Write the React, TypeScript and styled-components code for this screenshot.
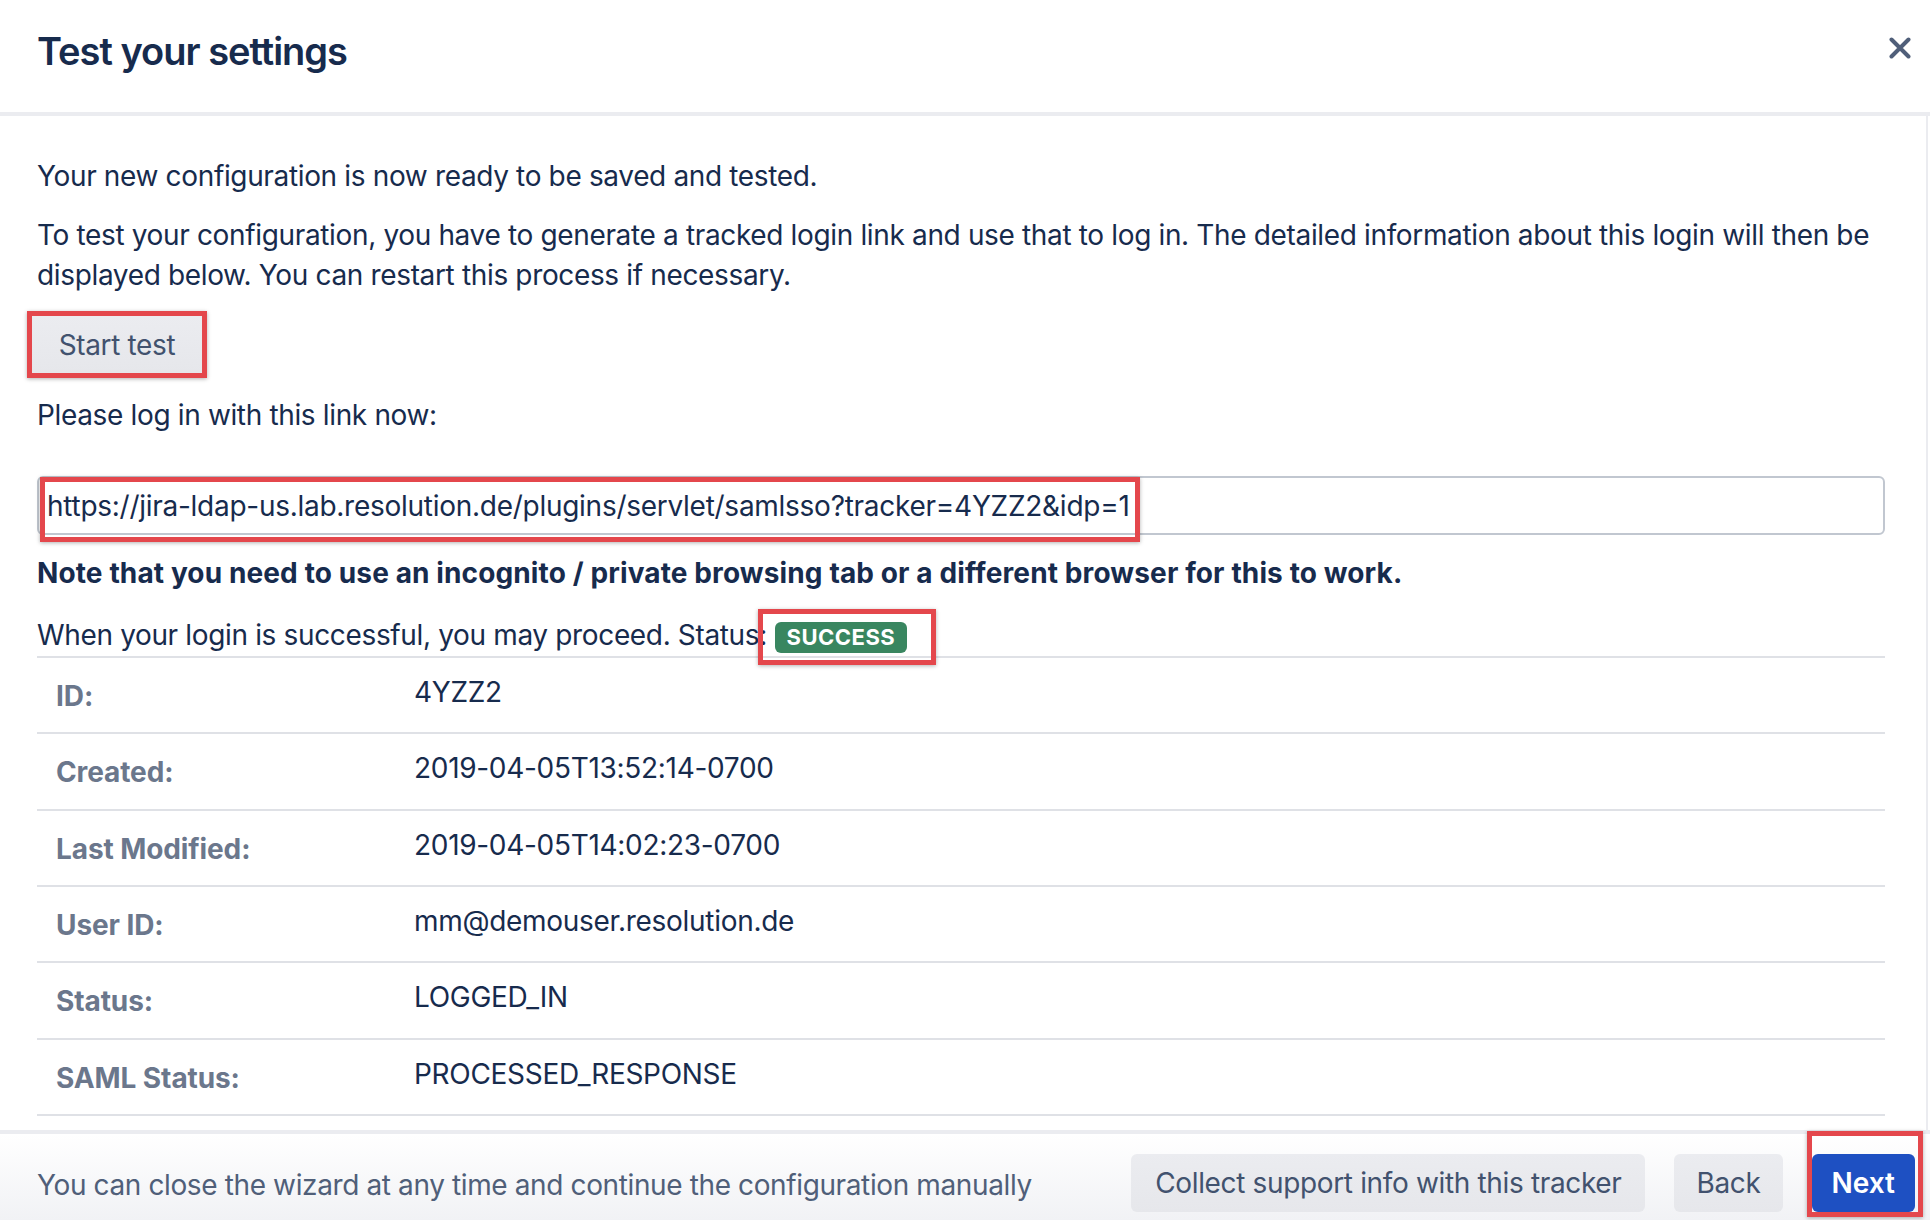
import React from 'react';
import styled, { createGlobalStyle } from 'styled-components';

const Global = createGlobalStyle`
  html, body { margin: 0; padding: 0; background: #fff; }
  body {
    font-family: Inter, "Liberation Sans", Arial, sans-serif;
    color: #172b4d;
    letter-spacing: -0.35px;
    -webkit-font-smoothing: antialiased;
  }
  * { box-sizing: border-box; }
`;

const Dialog = styled.div`
  width: 1930px;
  height: 1220px;
  display: flex;
  flex-direction: column;
  overflow: hidden;
  background: #fff;
`;

const Header = styled.header`
  height: 116px;
  flex-shrink: 0;
  border-bottom: 4px solid #ebecf0;
  display: flex;
  justify-content: space-between;
  align-items: flex-start;
  padding: 28px 19px 0 37px;
`;

const Title = styled.h1`
  margin: 0;
  font-size: 38px;
  line-height: 46px;
  font-weight: 600;
  color: #172b4d;
  letter-spacing: -1px;
`;

const CloseButton = styled.button`
  border: 0;
  background: none;
  padding: 0;
  margin-top: 9px;
  width: 22px;
  height: 22px;
  display: flex;
  color: #505f79;
  cursor: pointer;
`;

const Body = styled.main`
  flex: 1;
  margin-right: 2px;
  border-right: 2px solid #ebecf0;
  padding: 40px 41px 0 37px;
  display: flex;
  flex-direction: column;
  align-items: stretch;
`;

const Text = styled.p<{ $mt?: number; $bold?: boolean }>`
  margin: ${(p) => p.$mt ?? 0}px 0 0;
  font-size: 28px;
  line-height: 40px;
  font-weight: ${(p) => (p.$bold ? 700 : 400)};
  letter-spacing: ${(p) => (p.$bold ? '0.12px' : '-0.35px')};
  color: #172b4d;
`;

const Annotated = styled.div<{ $mt?: number }>`
  align-self: flex-start;
  margin: ${(p) => p.$mt ?? 0}px 0 0 -10px;
  display: inline-flex;
  border: 5px solid #e4474c;
  box-shadow: 0 1px 4px rgba(0, 0, 0, 0.3);
`;

const GrayButton = styled.button<{ $w?: number; $px?: number }>`
  height: ${(p) => (p.$w ? 57 : 58)}px;
  ${(p) => (p.$w ? `width: ${p.$w}px;` : `padding: 0 ${p.$px ?? 24}px;`)}
  border: 0;
  border-radius: ${(p) => (p.$w ? 0 : 6)}px;
  background: linear-gradient(#ebecf0, #e6e7eb);
  color: #42526e;
  font-family: inherit;
  font-size: 28px;
  font-weight: 400;
  letter-spacing: -0.35px;
  display: flex;
  align-items: center;
  justify-content: center;
  cursor: pointer;
  white-space: nowrap;
`;

const PrimaryButton = styled.button`
  position: relative;
  height: 58px;
  padding: 0 20px;
  border: 0;
  border-radius: 6px;
  background: #1e50c2;
  color: #fff;
  font-family: inherit;
  font-size: 28px;
  font-weight: 600;
  display: flex;
  align-items: center;
  cursor: pointer;
`;

const Frame = styled.span<{ $t: number; $l: number; $r: number; $b: number }>`
  position: absolute;
  top: ${(p) => p.$t}px;
  left: ${(p) => p.$l}px;
  right: ${(p) => p.$r}px;
  bottom: ${(p) => p.$b}px;
  border: 5px solid #e4474c;
  box-shadow: 0 1px 4px rgba(0, 0, 0, 0.3);
  pointer-events: none;
`;

const InputWrap = styled.div`
  position: relative;
  margin-top: 41px;
`;

const UrlInput = styled.input`
  display: block;
  width: 100%;
  height: 59px;
  border: 2px solid #c1c7d0;
  border-radius: 6px;
  padding: 0 8px;
  background: #fff;
  font-family: inherit;
  font-size: 28px;
  letter-spacing: -0.27px;
  color: #172b4d;
  outline: none;
`;

const LozengeWrap = styled.span`
  position: relative;
  display: inline-block;
  margin-left: 0;
`;

const Lozenge = styled.span`
  display: inline-block;
  height: 31px;
  line-height: 31px;
  padding: 0 12px;
  border-radius: 6px;
  background: #398660;
  color: #fff;
  font-size: 22px;
  font-weight: 700;
  letter-spacing: 0.5px;
  text-transform: uppercase;
`;

const Table = styled.div`
  margin-top: 1px;
  border-top: 2px solid #dfe1e6;
`;

const Row = styled.div`
  display: grid;
  grid-template-columns: 377px 1fr;
  height: 76.33px;
  border-bottom: 2px solid #dfe1e6;
`;

const Label = styled.div`
  padding: 18px 0 0 19px;
  font-size: 28px;
  line-height: 40px;
  font-weight: 700;
  letter-spacing: -0.1px;
  color: #6b778c;
`;

const Value = styled.div`
  padding-top: 14px;
  font-size: 28px;
  line-height: 40px;
  letter-spacing: -0.3px;
  color: #172b4d;
`;

const Footer = styled.footer`
  height: 90px;
  flex-shrink: 0;
  border-top: 4px solid #ebecf0;
  background: linear-gradient(#ffffff, #f1f2f5);
  display: flex;
  align-items: flex-start;
  padding: 20px 15px 0 37px;
`;

const FooterText = styled.div`
  flex: 1;
  margin-top: 11px;
  font-size: 28px;
  line-height: 40px;
  letter-spacing: -0.38px;
  color: #505f79;
`;

const Actions = styled.div`
  display: flex;
  gap: 29px;
`;

const rows: [string, string][] = [
  ['ID:', '4YZZ2'],
  ['Created:', '2019-04-05T13:52:14-0700'],
  ['Last Modified:', '2019-04-05T14:02:23-0700'],
  ['User ID:', 'mm@demouser.resolution.de'],
  ['Status:', 'LOGGED_IN'],
  ['SAML Status:', 'PROCESSED_RESPONSE'],
];

export default function App() {
  return (
    <Dialog>
      <Global />
      <Header>
        <Title>Test your settings</Title>
        <CloseButton aria-label="Close">
          <svg width="22" height="22" viewBox="0 0 22 22">
            <path d="M2.5 2.5 L19.5 19.5 M19.5 2.5 L2.5 19.5" stroke="currentColor" strokeWidth="4" strokeLinecap="round" fill="none" />
          </svg>
        </CloseButton>
      </Header>
      <Body>
        <Text>Your new configuration is now ready to be saved and tested.</Text>
        <Text $mt={19}>
          To test your configuration, you have to generate a tracked login link and use that to log in. The detailed
          information about this login will then be displayed below. You can restart this process if necessary.
        </Text>
        <Annotated $mt={16}>
          <GrayButton $w={170}>Start test</GrayButton>
        </Annotated>
        <Text $mt={17}>Please log in with this link now:</Text>
        <InputWrap>
          <UrlInput readOnly value="https://jira-ldap-us.lab.resolution.de/plugins/servlet/samlsso?tracker=4YZZ2&idp=1" />
          <Frame $t={1} $l={3} $r={745} $b={-7} />
        </InputWrap>
        <Text $mt={18} $bold>
          Note that you need to use an incognito / private browsing tab or a different browser for this to work.
        </Text>
        <Text $mt={22}>
          When your login is successful, you may proceed. Status:{' '}
          <LozengeWrap>
            <Lozenge>Success</Lozenge>
            <Frame $t={-6} $l={-17} $r={-29} $b={-10} />
          </LozengeWrap>
        </Text>
        <Table>
          {rows.map(([k, v]) => (
            <Row key={k}>
              <Label>{k}</Label>
              <Value>{v}</Value>
            </Row>
          ))}
        </Table>
      </Body>
      <Footer>
        <FooterText>You can close the wizard at any time and continue the configuration manually</FooterText>
        <Actions>
          <GrayButton>Collect support info with this tracker</GrayButton>
          <GrayButton $px={22}>Back</GrayButton>
          <PrimaryButton>
            Next
            <Frame $t={-23} $l={-5} $r={-8} $b={-5} />
          </PrimaryButton>
        </Actions>
      </Footer>
    </Dialog>
  );
}
